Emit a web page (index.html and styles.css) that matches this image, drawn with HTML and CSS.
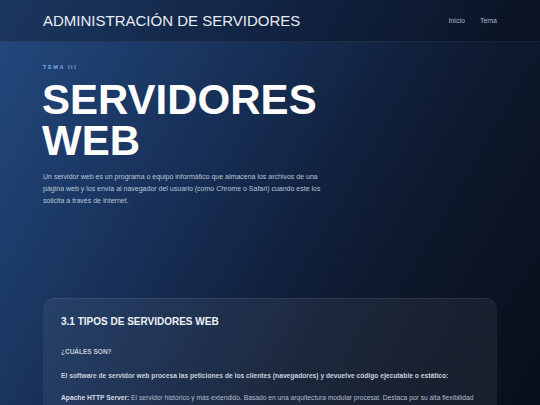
FILE: index.html
```html
<!DOCTYPE html>
<html lang="es">
<head>
<meta charset="utf-8">
<title>Servidores Web</title>
<link rel="stylesheet" href="styles.css">
</head>
<body>
<header class="topbar">
  <div class="wrap topbar-inner">
    <div class="brand">ADMINISTRACIÓN DE SERVIDORES</div>
    <nav class="nav">
      <a href="#">Inicio</a>
      <a href="#">Tema</a>
    </nav>
  </div>
</header>
<main class="wrap">
  <section class="hero">
    <div class="kicker">TEMA III</div>
    <h1 class="title">SERVIDORES<br>WEB</h1>
    <p class="lead">Un servidor web es un programa o equipo informático que almacena los archivos de una página web y los envía al navegador del usuario (como Chrome o Safari) cuando este los solicita a través de Internet.</p>
  </section>
  <section class="card">
    <h2 class="card-title">3.1 TIPOS DE SERVIDORES WEB</h2>
    <h3 class="card-sub">¿CUÁLES SON?</h3>
    <p class="card-strong">El software de servidor web procesa las peticiones de los clientes (navegadores) y devuelve código ejecutable o estático:</p>
    <p class="card-text"><b>Apache HTTP Server:</b> El servidor histórico y más extendido. Basado en una arquitectura modular procesal. Destaca por su alta flexibilidad gracias a sus módulos y a la configuración por directorio mediante archivos .htaccess.</p>
  </section>
</main>
</body>
</html>
```
FILE: styles.css
```css
html, body {
  margin: 0;
  padding: 0;
}
body {
  font-family: "Liberation Sans", Arial, sans-serif;
  color: #ffffff;
  min-height: 405px;
  background: linear-gradient(120deg, #244a80 0%, #173058 35%, #0e1a30 65%, #080e18 100%);
  overflow: hidden;
}
.wrap {
  padding: 0 43px;
}
.topbar {
  height: 41px;
  border-bottom: 1px solid rgba(255, 255, 255, 0.06);
  background: rgba(5, 10, 20, 0.3);
}
.topbar-inner {
  height: 41px;
  display: flex;
  align-items: center;
  justify-content: space-between;
}
.brand {
  font-size: 15px;
  letter-spacing: 0;
  color: #e8edf5;
}
.nav {
  display: flex;
  gap: 15px;
}
.nav a {
  font-size: 7px;
  color: #aab5c6;
  text-decoration: none;
}
.hero {
  padding-top: 22px;
}
.kicker {
  font-size: 5.5px;
  font-weight: bold;
  letter-spacing: 1.6px;
  color: #7eaae6;
}
.title {
  margin: 9px 0 0 -1px;
  font-size: 42px;
  line-height: 41px;
  font-weight: bold;
  letter-spacing: 0;
  color: #ffffff;
}
.lead {
  margin: 10px 0 0 0;
  width: 280px;
  font-size: 7px;
  line-height: 12px;
  color: #b9c5d8;
}
.card {
  margin-top: 91px;
  padding: 17px 18px 20px;
  border-radius: 12px;
  background: rgba(255, 255, 255, 0.06);
  border-top: 1px solid rgba(255, 255, 255, 0.07);
}
.card-title {
  margin: 0;
  font-size: 10px;
  font-weight: bold;
  color: #eef2f7;
}
.card-sub {
  margin: 21px 0 0 0;
  font-size: 6.5px;
  font-weight: bold;
  color: #c4ccd8;
}
.card-strong {
  margin: 17px 0 0 0;
  font-size: 6.7px;
  font-weight: bold;
  color: #c9d0db;
}
.card-text {
  margin: 13px 0 0 0;
  font-size: 6.7px;
  line-height: 12px;
  color: #b2bccb;
}
.card-text b {
  color: #d5dbe4;
}
```
